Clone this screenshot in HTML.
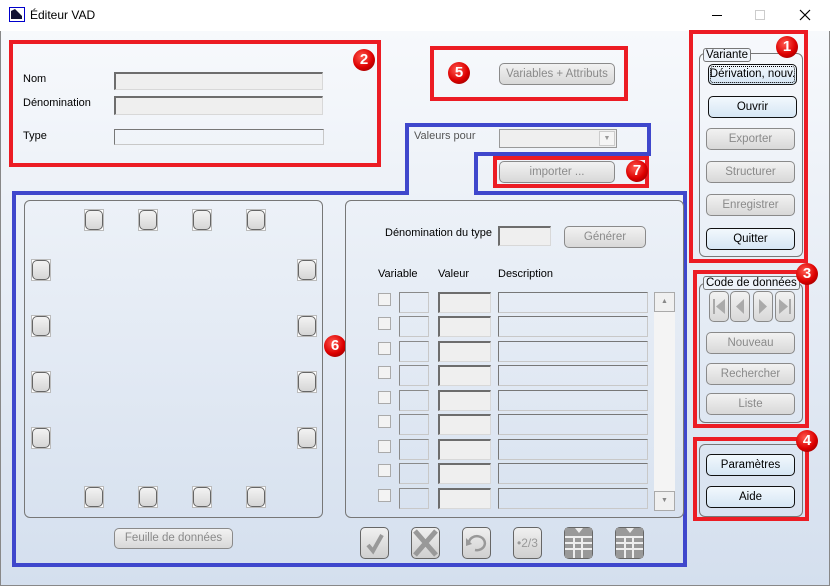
<!DOCTYPE html>
<html><head><meta charset="utf-8"><style>
*{margin:0;padding:0;box-sizing:border-box}
body{width:830px;height:586px;overflow:hidden;font-family:"Liberation Sans",sans-serif;font-size:11px;color:#000;position:relative;background:#fff}
.win{position:absolute;left:0;top:31px;width:830px;height:555px;background:linear-gradient(#f7f9fc,#d4dfee);border-left:1px solid #888;border-right:1px solid #888;border-bottom:1px solid #888}
.a{position:absolute}
.red{position:absolute;border:4px solid #ec1c24}
.inp{position:absolute;background:#efefef;border:1px solid #d8d8d8;border-top:2px solid #6d6d6d;border-left:2px solid #6d6d6d}
.inp2{position:absolute;border:1px solid #c8c8c8;border-top-color:#8a8a8a;border-left-color:#8a8a8a}
.btn{position:absolute;border:1px solid #8a8a8a;border-radius:5px;background:linear-gradient(#f2f2f2,#d8d8d8);color:#8a8a8a;text-align:center;font-size:11.5px;line-height:18px}
.bb{position:absolute;border:1px solid #111;border-radius:5px;background:linear-gradient(#f2f8fd,#d6e6f4);color:#000;text-align:center;font-size:11.5px;line-height:18px}
.grp{position:absolute;border:1px solid #777;border-radius:6px}
.leg{position:absolute;border:1px solid #777;border-radius:3px;background:#eef3fa;font-size:11.5px;line-height:12px;padding:0 2px}
.badge{position:absolute;width:22px;height:22px;border-radius:50%;background:radial-gradient(circle at 40% 35%,#ff5a50,#d00 55%,#7a0000);color:#fff;font-weight:bold;font-size:15px;line-height:22px;text-align:center}
.pin{position:absolute;width:20px;height:22px;border:1px solid #bbb;background:#fff}
.pin i{position:absolute;left:0;top:0;width:18px;height:20px;border:1px solid #666;border-radius:5px;background:linear-gradient(#f3f3f3,#d6d6d6)}
.cb{position:absolute;width:13px;height:13px;border:1px solid #aaa;background:#f3f3f3}
.tb{position:absolute;width:29px;height:32px;border:1px solid #666;border-radius:5px;background:linear-gradient(#f0f0f0,#cfcfcf)}
</style></head><body>
<div class="a" style="left:9px;top:7px;width:16px;height:15px;border:1.5px solid #00c;background:#fff"><svg width="13" height="12"><path d="M1 11 L1 3 L5 1 L12 8 L12 11 Z" fill="#113"/></svg></div>
<div class="a" style="left:30px;top:8px;font-size:12px">Éditeur VAD</div>
<div class="a" style="left:712px;top:15px;width:10px;border-top:1px solid #000"></div>
<div class="a" style="left:755px;top:10px;width:10px;height:10px;border:1px solid #ccc"></div>
<svg class="a" style="left:799px;top:9px" width="12" height="12"><path d="M1 1 L11 11 M11 1 L1 11" stroke="#000" stroke-width="1.2"/></svg>
<div class="win"></div>

<div class="red" style="left:9px;top:40px;width:372px;height:127px"></div>
<div class="badge" style="left:353px;top:49px">2</div>
<div class="a" style="left:23px;top:73px">Nom</div>
<div class="inp" style="left:114px;top:72px;width:209px;height:18px"></div>
<div class="a" style="left:23px;top:97px">Dénomination</div>
<div class="inp" style="left:114px;top:96px;width:209px;height:19px"></div>
<div class="a" style="left:23px;top:130px">Type</div>
<div class="inp2" style="left:114px;top:129px;width:210px;height:16px;border-top:1px solid #777;border-left:1px solid #777"></div>

<div class="red" style="left:430px;top:46px;width:198px;height:55px"></div>
<div class="badge" style="left:448px;top:62px">5</div>
<div class="btn" style="left:499px;top:63px;width:116px;height:22px;line-height:20px">Variables + Attributs</div>

<svg class="a" style="left:0;top:0" width="830" height="586"><path d="M407 193 V125 H649 V154 H476 V193 H685 V565 H14 V193 Z" fill="none" stroke="#3f47cc" stroke-width="4"/></svg>
<div class="a" style="left:414px;top:130px;color:#555">Valeurs pour</div>
<div class="inp2" style="left:499px;top:129px;width:118px;height:19px;background:#efefef;border-color:#999"></div>
<div class="a" style="left:599px;top:131px;width:16px;height:15px;background:#f5f5f5;border:1px solid #ccc;font-size:7px;color:#999;text-align:center;line-height:14px">▼</div>
<div class="red" style="left:493px;top:156px;width:156px;height:32px"></div>
<div class="btn" style="left:499px;top:161px;width:116px;height:22px;line-height:20px">importer ...</div>
<div class="badge" style="left:626px;top:160px">7</div>

<div class="grp" style="left:24px;top:200px;width:299px;height:318px"></div>
<div class="pin" style="left:84px;top:209px"><i></i></div><div class="pin" style="left:138px;top:209px"><i></i></div><div class="pin" style="left:192px;top:209px"><i></i></div><div class="pin" style="left:246px;top:209px"><i></i></div>
<div class="pin" style="left:84px;top:486px"><i></i></div><div class="pin" style="left:138px;top:486px"><i></i></div><div class="pin" style="left:192px;top:486px"><i></i></div><div class="pin" style="left:246px;top:486px"><i></i></div>
<div class="pin" style="left:31px;top:259px"><i></i></div><div class="pin" style="left:31px;top:315px"><i></i></div><div class="pin" style="left:31px;top:371px"><i></i></div><div class="pin" style="left:31px;top:427px"><i></i></div>
<div class="pin" style="left:297px;top:259px"><i></i></div><div class="pin" style="left:297px;top:315px"><i></i></div><div class="pin" style="left:297px;top:371px"><i></i></div><div class="pin" style="left:297px;top:427px"><i></i></div>
<div class="badge" style="left:324px;top:335px">6</div>
<div class="btn" style="left:114px;top:528px;width:119px;height:21px">Feuille de données</div>

<div class="grp" style="left:345px;top:200px;width:339px;height:318px"></div>
<div class="a" style="left:385px;top:227px">Dénomination du type</div>
<div class="inp" style="left:498px;top:226px;width:53px;height:20px"></div>
<div class="btn" style="left:564px;top:226px;width:82px;height:22px;line-height:20px">Générer</div>
<div class="a" style="left:378px;top:268px">Variable</div>
<div class="a" style="left:438px;top:268px">Valeur</div>
<div class="a" style="left:498px;top:268px">Description</div>
<div id="rows"></div>
<div class="a" style="left:654px;top:292px;width:21px;height:219px;background:#f4f4f4"></div>
<div class="a" style="left:654px;top:292px;width:21px;height:20px;border:1px solid #aaa;background:#f0f0f0;font-size:7px;color:#888;text-align:center;line-height:18px">▲</div>
<div class="a" style="left:654px;top:491px;width:21px;height:20px;border:1px solid #aaa;background:#f0f0f0;font-size:7px;color:#888;text-align:center;line-height:18px">▼</div>

<div class="tb" style="left:360px;top:527px"><svg width="27" height="30"><path d="M7 17 L12 23 L21 7" fill="none" stroke="#999" stroke-width="4"/></svg></div>
<div class="tb" style="left:411px;top:527px"><svg width="27" height="30"><path d="M3 3 L24 27 M24 3 L3 27" stroke="#999" stroke-width="5"/></svg></div>
<div class="tb" style="left:462px;top:527px"><svg width="27" height="30"><path d="M6 14 A8 7 0 1 1 12 22" fill="none" stroke="#999" stroke-width="2.5"/><path d="M3 10 L9 16 L3 18Z" fill="#999"/></svg></div>
<div class="tb" style="left:513px;top:527px;color:#999;font-size:12px;line-height:30px;text-align:center">•2/3</div>
<div class="tb" style="left:564px;top:527px"><svg width="27" height="30"><path d="M0 0 H27 V30 H0Z" fill="#999"/><path d="M10 0 L14 5 L18 0" fill="#eee"/><path d="M0 9 H27 M0 15 H27 M0 21 H27 M9 9 V30 M17 9 V30" stroke="#eee" stroke-width="2"/></svg></div>
<div class="tb" style="left:615px;top:527px"><svg width="27" height="30"><path d="M0 0 H27 V30 H0Z" fill="#999"/><path d="M10 0 L14 5 L18 0" fill="#eee"/><path d="M0 9 H27 M0 15 H27 M0 21 H27 M9 9 V30 M17 9 V30" stroke="#eee" stroke-width="2"/></svg></div>

<div class="red" style="left:689px;top:30px;width:119px;height:233px"></div>
<div class="grp" style="left:699px;top:53px;width:104px;height:204px"></div>
<div class="leg" style="left:703px;top:48px">Variante</div>
<div class="badge" style="left:776px;top:36px">1</div>
<div class="bb" style="left:708px;top:64px;width:89px;height:21px;outline:1px dotted #000;outline-offset:-3px;white-space:nowrap;overflow:hidden">Dérivation, nouv.</div>
<div class="bb" style="left:708px;top:96px;width:89px;height:22px;line-height:20px">Ouvrir</div>
<div class="btn" style="left:706px;top:128px;width:89px;height:22px;line-height:20px">Exporter</div>
<div class="btn" style="left:706px;top:161px;width:89px;height:22px;line-height:20px">Structurer</div>
<div class="btn" style="left:706px;top:194px;width:89px;height:22px;line-height:20px">Enregistrer</div>
<div class="bb" style="left:706px;top:228px;width:89px;height:22px;line-height:20px">Quitter</div>

<div class="red" style="left:693px;top:270px;width:116px;height:158px"></div>
<div class="grp" style="left:699px;top:283px;width:104px;height:140px"></div>
<div class="leg" style="left:703px;top:276px">Code de données</div>
<div class="badge" style="left:796px;top:263px">3</div>
<div class="btn" style="left:709px;top:291px;width:20px;height:31px"><svg width="18" height="29"><path d="M4 7 V22" stroke="#aaa" stroke-width="2"/><path d="M15 7 L6 14.5 L15 22Z" fill="#aaa"/></svg></div>
<div class="btn" style="left:730px;top:291px;width:20px;height:31px"><svg width="18" height="29"><path d="M13 7 L5 14.5 L13 22Z" fill="#aaa"/></svg></div>
<div class="btn" style="left:753px;top:291px;width:20px;height:31px"><svg width="18" height="29"><path d="M5 7 L13 14.5 L5 22Z" fill="#aaa"/></svg></div>
<div class="btn" style="left:775px;top:291px;width:20px;height:31px"><svg width="18" height="29"><path d="M14 7 V22" stroke="#aaa" stroke-width="2"/><path d="M3 7 L12 14.5 L3 22Z" fill="#aaa"/></svg></div>
<div class="btn" style="left:706px;top:332px;width:89px;height:22px;line-height:20px">Nouveau</div>
<div class="btn" style="left:706px;top:363px;width:89px;height:22px;line-height:20px">Rechercher</div>
<div class="btn" style="left:706px;top:393px;width:89px;height:22px;line-height:20px">Liste</div>

<div class="red" style="left:693px;top:437px;width:116px;height:84px"></div>
<div class="grp" style="left:699px;top:444px;width:104px;height:73px"></div>
<div class="badge" style="left:796px;top:430px">4</div>
<div class="bb" style="left:706px;top:454px;width:89px;height:22px;line-height:20px">Paramètres</div>
<div class="bb" style="left:706px;top:486px;width:89px;height:22px;line-height:20px">Aide</div>

<script>
var h='';for(var i=0;i<9;i++){var y=Math.round(293+i*24.45);
h+='<div class="cb" style="left:378px;top:'+y+'px"></div><div class="inp2" style="left:399px;top:'+(y-1)+'px;width:30px;height:21px"></div><div class="inp" style="left:438px;top:'+(y-1)+'px;width:53px;height:21px"></div><div class="inp2" style="left:498px;top:'+(y-1)+'px;width:150px;height:21px;border-top:1px solid #777;border-left:1px solid #777"></div>';}
document.getElementById('rows').outerHTML=h;
</script>
</body></html>
